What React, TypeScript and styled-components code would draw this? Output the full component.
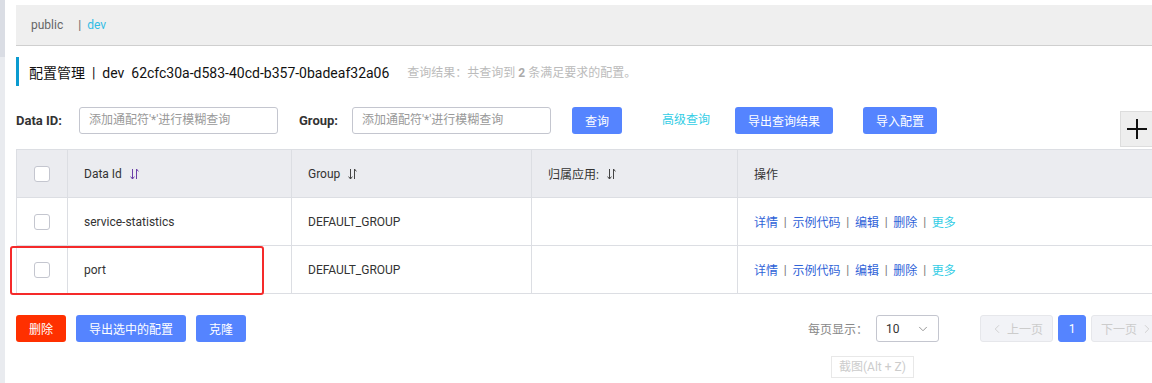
import React from 'react';
import styled, { createGlobalStyle } from 'styled-components';
import { ChevronDown, ChevronLeft, ChevronRight } from 'lucide-react';

const GlobalStyle = createGlobalStyle`
  html, body {
    margin: 0;
    padding: 0;
    background: #fff;
    overflow: hidden;
  }
  body {
    font-family: Roboto, "Noto Sans CJK SC", sans-serif;
    color: #333;
    font-size: 12px;
  }
`;

const Page = styled.div`
  display: flex;
  height: 383px;
  width: 1152px;
  overflow: hidden;
`;

// 左侧菜单露出的一条
const SideStrip = styled.div`
  width: 5px;
  flex: none;
  display: flex;
  flex-direction: column;
  margin-right: 11px;
`;

const StripPart = styled.div<{ $top?: boolean }>`
  height: ${p => (p.$top ? '57px' : 'auto')};
  flex: ${p => (p.$top ? 'none' : '1')};
  background: ${p => (p.$top ? '#dadde4' : '#e9ebef')};
`;

const Main = styled.div`
  width: 1148px;
  flex: none;
  position: relative;
`;

const NamespaceBar = styled.div`
  margin-top: 5px;
  height: 40px;
  background: #efefef;
  border-bottom: 1px solid #cfcfcf;
  display: flex;
  align-items: center;
  padding-left: 15px;
  font-size: 12px;
  color: #666;
`;

const NsItem = styled.span<{ $active?: boolean }>`
  color: ${p => (p.$active ? '#33bde5' : '#666')};
`;

const NsSep = styled.span`
  margin: 0 6px 0 15px;
  color: #666;
`;

const TitleRow = styled.div`
  margin-top: 11px;
  height: 29px;
  border-left: 3px solid #0a9bd0;
  padding-left: 10px;
  display: flex;
  align-items: center;
`;

const TitleText = styled.span`
  font-size: 14px;
  color: #111;
  white-space: pre;
`;

const ResultText = styled.span`
  margin-left: 18px;
  font-size: 12px;
  color: #bbb;
  b {
    font-weight: bold;
    color: #aaa;
  }
`;

const FilterRow = styled.div`
  margin-top: 21px;
  display: flex;
  align-items: flex-start;
`;

const Label = styled.span<{ $w: number }>`
  width: ${p => p.$w}px;
  height: 27px;
  line-height: 27px;
  font-weight: bold;
  font-size: 13px;
  color: #333;
  flex: none;
`;

const Input = styled.div`
  width: 188px;
  height: 25px;
  border: 1px solid #c4c6cf;
  border-radius: 3px;
  font-size: 12px;
  color: #999;
  line-height: 25px;
  padding-left: 9px;
  box-sizing: content-box;
  margin-right: 21px;
  flex: none;
`;

const Btn = styled.button<{ $w: number; $danger?: boolean; $gap?: number }>`
  width: ${p => p.$w}px;
  height: 27px;
  border: none;
  border-radius: 3px;
  background: ${p => (p.$danger ? '#ff3000' : '#5584ff')};
  color: #fff;
  font-family: inherit;
  font-size: 12px;
  padding: 0;
  margin-right: ${p => p.$gap ?? 0}px;
  flex: none;
`;

const LinkBtn = styled.span`
  height: 27px;
  line-height: 27px;
  color: #33cde5;
  font-size: 12px;
  margin: 0 25px 0 40px;
`;

const PlusBtn = styled.div`
  margin-left: auto;
  margin-top: 4px;
  margin-right: 11px;
  width: 31px;
  height: 34px;
  background: #eee;
  border: 1px solid #ddd;
  display: flex;
  align-items: center;
  justify-content: center;
`;

const Table = styled.div`
  margin-top: 2px;
  border: 1px solid #dcdee3;
  border-right: none;
  position: relative;
`;

const Row = styled.div<{ $head?: boolean }>`
  display: grid;
  grid-template-columns: 50px 224px 240px 206px 1fr;
  height: 47px;
  background: ${p => (p.$head ? '#ebecf0' : '#fff')};
  & + & {
    border-top: 1px solid #dcdee3;
  }
`;

const Cell = styled.div<{ $center?: boolean }>`
  display: flex;
  align-items: center;
  justify-content: ${p => (p.$center ? 'center' : 'flex-start')};
  padding-left: ${p => (p.$center ? 0 : 16)}px;
  font-size: 12px;
  color: #333;
  & + & {
    border-left: 1px solid #dcdee3;
  }
`;

const Check = styled.span`
  width: 14px;
  height: 14px;
  border: 1px solid #c4c6cf;
  border-radius: 3px;
  background: #fff;
`;

const SortIcon = styled.svg`
  margin-left: 8px;
`;

const OpLink = styled.span<{ $more?: boolean }>`
  color: ${p => (p.$more ? '#33cde5' : '#2f63d8')};
`;

const OpSep = styled.span`
  color: #777;
  margin: 0 5.75px;
`;

// 截图里的红色标注框
const Highlight = styled.div`
  position: absolute;
  left: -7px;
  top: 96px;
  width: 250px;
  height: 45px;
  border: 2px solid #f52a2a;
  border-radius: 3px;
  pointer-events: none;
`;

const Footer = styled.div`
  margin-top: 21px;
  display: flex;
  align-items: center;
`;

const PageSize = styled.div`
  margin-left: auto;
  display: flex;
  align-items: center;
`;

const PageLabel = styled.span`
  font-size: 12px;
  color: #888;
  margin-right: 8px;
`;

const Select = styled.div`
  width: 63px;
  height: 27px;
  border: 1px solid #c4c6cf;
  border-radius: 3px;
  display: flex;
  align-items: center;
  justify-content: space-between;
  padding: 0 8px 0 9px;
  box-sizing: border-box;
  font-size: 12px;
  color: #333;
  margin-right: 41px;
`;

const PageBtn = styled.div<{ $w: number; $active?: boolean; $first?: boolean }>`
  width: ${p => p.$w}px;
  height: 27px;
  box-sizing: border-box;
  border-radius: 3px;
  border: 1px solid ${p => (p.$active ? '#5584ff' : '#e6e7eb')};
  background: ${p => (p.$active ? '#5584ff' : '#f2f3f7')};
  color: ${p => (p.$active ? '#fff' : '#ccc')};
  display: flex;
  align-items: center;
  justify-content: center;
  gap: 3px;
  font-size: 12px;
  margin-left: ${p => (p.$first ? 0 : 5)}px;
  flex: none;
`;

const Tooltip = styled.div`
  position: absolute;
  left: 815px;
  top: 356px;
  height: 20px;
  padding: 0 7px;
  border: 1px solid #e8e8e8;
  font-size: 12px;
  line-height: 20px;
  color: #ccc;
  background: #fff;
`;

const Sort = ({ tint }: { tint?: string }) => (
  <SortIcon width="9" height="12" viewBox="0 0 9 12">
    <path d="M2.5 1v10M0.6 8.6l1.9 2.4l1.9-2.4" fill="none" stroke={tint ?? '#444'} strokeWidth="1" />
    <path d="M6.5 11V1M6.5 1l1.9 2.4" fill="none" stroke={tint ?? '#444'} strokeWidth="1" />
  </SortIcon>
);

const rows = [
  { id: 'service-statistics', group: 'DEFAULT_GROUP' },
  { id: 'port', group: 'DEFAULT_GROUP' },
];

const ops = ['详情', '示例代码', '编辑', '删除'];

export default function App() {
  return (
    <>
      <GlobalStyle />
      <Page>
        <SideStrip>
          <StripPart $top />
          <StripPart />
        </SideStrip>
        <Main>
          <NamespaceBar>
            <NsItem>public</NsItem>
            <NsSep>|</NsSep>
            <NsItem $active>dev</NsItem>
          </NamespaceBar>
          <TitleRow>
            <TitleText>配置管理  |  dev  62cfc30a-d583-40cd-b357-0badeaf32a06</TitleText>
            <ResultText>
              查询结果：共查询到 <b>2</b> 条满足要求的配置。
            </ResultText>
          </TitleRow>
          <FilterRow>
            <Label $w={63}>Data ID:</Label>
            <Input>添加通配符'*'进行模糊查询</Input>
            <Label $w={53}>Group:</Label>
            <Input>添加通配符'*'进行模糊查询</Input>
            <Btn $w={50}>查询</Btn>
            <LinkBtn>高级查询</LinkBtn>
            <Btn $w={98} $gap={30}>导出查询结果</Btn>
            <Btn $w={74}>导入配置</Btn>
            <PlusBtn>
              <svg width="22" height="22" viewBox="0 0 22 22">
                <path d="M11 1v20M1 11h20" stroke="#111" strokeWidth="2" />
              </svg>
            </PlusBtn>
          </FilterRow>
          <Table>
            <Row $head>
              <Cell $center>
                <Check />
              </Cell>
              <Cell>
                Data Id
                <Sort tint="#6a3fa8" />
              </Cell>
              <Cell>
                Group
                <Sort />
              </Cell>
              <Cell>
                归属应用:
                <Sort />
              </Cell>
              <Cell>操作</Cell>
            </Row>
            {rows.map(r => (
              <Row key={r.id}>
                <Cell $center>
                  <Check />
                </Cell>
                <Cell>{r.id}</Cell>
                <Cell>{r.group}</Cell>
                <Cell />
                <Cell>
                  {ops.map(o => (
                    <React.Fragment key={o}>
                      <OpLink>{o}</OpLink>
                      <OpSep>|</OpSep>
                    </React.Fragment>
                  ))}
                  <OpLink $more>更多</OpLink>
                </Cell>
              </Row>
            ))}
            <Highlight />
          </Table>
          <Footer>
            <Btn $w={50} $danger $gap={10}>删除</Btn>
            <Btn $w={110} $gap={10}>导出选中的配置</Btn>
            <Btn $w={50}>克隆</Btn>
            <PageSize>
              <PageLabel>每页显示：</PageLabel>
              <Select>
                10
                <ChevronDown size={14} color="#888" strokeWidth={1.5} />
              </Select>
              <PageBtn $w={73} $first>
                <ChevronLeft size={14} strokeWidth={1.5} />
                上一页
              </PageBtn>
              <PageBtn $w={28} $active>1</PageBtn>
              <PageBtn $w={73}>
                下一页
                <ChevronRight size={14} strokeWidth={1.5} />
              </PageBtn>
            </PageSize>
          </Footer>
          <Tooltip>截图(Alt + Z)</Tooltip>
        </Main>
      </Page>
    </>
  );
}
